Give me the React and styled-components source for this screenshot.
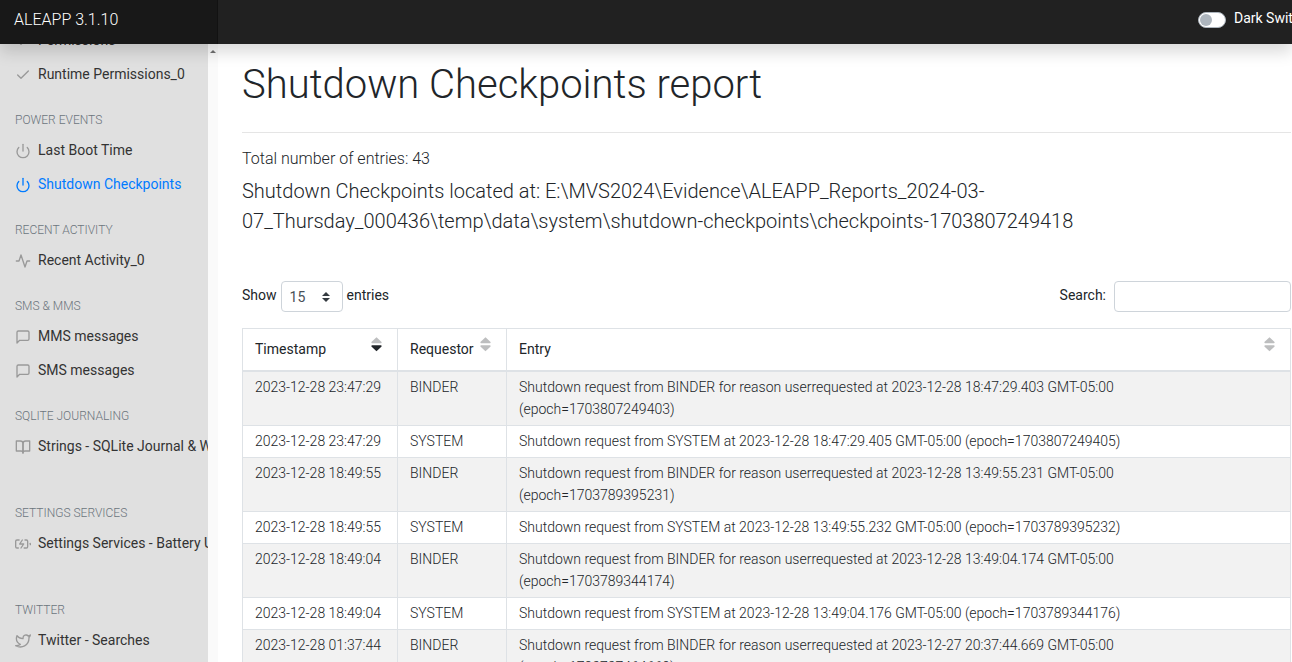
import React from "react";
import styled, { createGlobalStyle, css } from "styled-components";
import {
  FiActivity,
  FiBatteryCharging,
  FiBookOpen,
  FiCheck,
  FiMessageSquare,
  FiPower,
  FiTwitter,
} from "react-icons/fi";

const GlobalStyle = createGlobalStyle`
  *, *::before, *::after { box-sizing: border-box; }
  body {
    margin: 0;
    background: #fff;
    color: #212529;
    font-family: Roboto, "Liberation Sans", sans-serif;
    font-size: 16px;
    font-weight: 300;
    line-height: 24px;
  }
`;

const Page = styled.div`
  display: flex;
  flex-direction: column;
  height: 100vh;
  overflow: hidden;
`;

const TopBar = styled.header`
  position: relative;
  z-index: 2;
  display: flex;
  flex: none;
  justify-content: space-between;
  height: 44px;
  background: #212121;
  box-shadow: 0 8px 16px rgba(0, 0, 0, 0.15);
`;

const Brand = styled.a`
  width: 218px;
  padding: 8px 14px;
  background: rgba(0, 0, 0, 0.25);
  box-shadow: inset -1px 0 0 rgba(0, 0, 0, 0.25);
  color: #fff;
  text-decoration: none;
`;

const DarkSwitch = styled.label`
  display: flex;
  gap: 8px;
  width: 94px;
  padding-top: 6px;
  overflow: hidden;
  color: #fff;
  font-size: 14px;
  font-weight: 400;
  white-space: nowrap;
`;

const SwitchInput = styled.input`
  appearance: none;
  flex: none;
  width: 28px;
  height: 16px;
  margin: 6px 0 0;
  border: 1px solid #adb5bd;
  border-radius: 8px;
  background: #fff;

  &::before {
    content: "";
    display: block;
    width: 12px;
    height: 12px;
    margin: 1px;
    border-radius: 50%;
    background: #adb5bd;
  }

  &:checked::before {
    margin-left: 13px;
  }
`;

const Body = styled.div`
  display: flex;
  flex: 1;
  min-height: 0;
`;

const Sidebar = styled.nav`
  flex: none;
  width: 208px;
  overflow: hidden;
  background: #e0e0e0;
`;

const NavScroll = styled.div`
  margin-top: -21px;
`;

const Gutter = styled.div`
  flex: none;
  width: 10px;
  padding: 6px 2px;
  background: #fafafa;

  svg {
    display: block;
  }
`;

const NavHeading = styled.h6`
  margin: 19px 0 3px;
  padding: 0 15px;
  color: #6c757d;
  font-size: 12px;
  font-weight: 300;
  line-height: 20px;
  text-transform: uppercase;
`;

const NavList = styled.ul`
  margin: 0;
  padding: 0;
  list-style: none;
`;

const NavItem = styled.li`
  height: ${(p) => (p.$tall ? "55px" : "34px")};
`;

const NavLink = styled.a`
  display: flex;
  align-items: center;
  gap: 7px;
  height: 34px;
  padding-left: 15px;
  color: ${(p) => (p.$active ? "#007bff" : "#333")};
  font-size: 14px;
  font-weight: 400;
  text-decoration: none;
  white-space: nowrap;

  svg {
    flex: none;
    margin-top: 1px;
    color: ${(p) => (p.$active ? "inherit" : "#999")};
  }
`;

const Main = styled.main`
  flex: 1;
  min-width: 0;
  padding: 17px 1px 0 24px;
  overflow: hidden;
`;

const Title = styled.h1`
  margin: 0;
  font-size: 40px;
  font-weight: 300;
  line-height: 48px;
`;

const Rule = styled.hr`
  margin: 23px 0 14px;
  border: 0;
  border-top: 1px solid rgba(0, 0, 0, 0.1);
`;

const Total = styled.p`
  margin: 0 0 5px;
`;

const Location = styled.h5`
  margin: 0 0 45px;
  font-size: 20px;
  font-weight: 300;
  line-height: 30px;
`;

const Controls = styled.div`
  display: flex;
  justify-content: space-between;
  margin-bottom: 16px;
  font-size: 14px;
  font-weight: 400;
  line-height: 28px;
`;

const ControlLabel = styled.label`
  display: flex;
  align-items: flex-start;
  gap: ${(p) => p.$gap};
`;

const control = css`
  height: 31px;
  border: 1px solid #ced4da;
  border-radius: 4px;
  color: #495057;
  font: inherit;
`;

const LengthSelect = styled.select`
  ${control}
  appearance: none;
  width: 62px;
  padding: 0 8px;
  background: #fff
    url("data:image/svg+xml,%3Csvg xmlns='http://www.w3.org/2000/svg' viewBox='0 0 4 5'%3E%3Cpath fill='%23343a40' d='M2 0L0 2h4zm0 5L0 3h4z'/%3E%3C/svg%3E")
    no-repeat right 12px center / 8px 10px;
`;

const SearchInput = styled.input`
  ${control}
  width: 177px;
  padding: 0 8px;
  background: #fff;
`;

const Table = styled.table`
  width: 100%;
  border-collapse: collapse;
  table-layout: fixed;
  font-size: 14px;
  line-height: 22px;
`;

const Col = styled.col`
  width: ${(p) => p.$width};
`;

const HeadCell = styled.th`
  padding: 8px 15px 9px 12px;
  border: 1px solid #dee2e6;
  border-bottom-width: 2px;
  text-align: left;
`;

const SortButton = styled.button`
  display: flex;
  align-items: flex-start;
  justify-content: space-between;
  width: 100%;
  padding: 0;
  border: 0;
  background: none;
  color: inherit;
  font: inherit;
  font-weight: 400;
  line-height: 24px;

  svg {
    flex: none;
  }
`;

const Row = styled.tr`
  &:nth-of-type(odd) {
    background: #f2f2f2;
  }
`;

const Cell = styled.td`
  padding: 4px 12px 5px;
  border: 1px solid #dee2e6;
  vertical-align: top;
`;

const groups = [
  {
    items: [
      { icon: FiCheck, label: "Permissions" },
      { icon: FiCheck, label: "Runtime Permissions_0" },
    ],
  },
  {
    title: "Power Events",
    items: [
      { icon: FiPower, label: "Last Boot Time" },
      { icon: FiPower, label: "Shutdown Checkpoints", active: true },
    ],
  },
  {
    title: "Recent Activity",
    items: [{ icon: FiActivity, label: "Recent Activity_0" }],
  },
  {
    title: "SMS & MMS",
    items: [
      { icon: FiMessageSquare, label: "MMS messages" },
      { icon: FiMessageSquare, label: "SMS messages" },
    ],
  },
  {
    title: "SQLite Journaling",
    items: [{ icon: FiBookOpen, label: "Strings - SQLite Journal & WAL", tall: true }],
  },
  {
    title: "Settings Services",
    items: [{ icon: FiBatteryCharging, label: "Settings Services - Battery Usages", tall: true }],
  },
  {
    title: "Twitter",
    items: [{ icon: FiTwitter, label: "Twitter - Searches" }],
  },
];

const binder = "Shutdown request from BINDER for reason userrequested at ";
const system = "Shutdown request from SYSTEM at ";

const rows = [
  ["2023-12-28 23:47:29", "BINDER", binder + "2023-12-28 18:47:29.403 GMT-05:00", "(epoch=1703807249403)"],
  ["2023-12-28 23:47:29", "SYSTEM", system + "2023-12-28 18:47:29.405 GMT-05:00 (epoch=1703807249405)"],
  ["2023-12-28 18:49:55", "BINDER", binder + "2023-12-28 13:49:55.231 GMT-05:00", "(epoch=1703789395231)"],
  ["2023-12-28 18:49:55", "SYSTEM", system + "2023-12-28 13:49:55.232 GMT-05:00 (epoch=1703789395232)"],
  ["2023-12-28 18:49:04", "BINDER", binder + "2023-12-28 13:49:04.174 GMT-05:00", "(epoch=1703789344174)"],
  ["2023-12-28 18:49:04", "SYSTEM", system + "2023-12-28 13:49:04.176 GMT-05:00 (epoch=1703789344176)"],
  ["2023-12-28 01:37:44", "BINDER", binder + "2023-12-27 20:37:44.669 GMT-05:00", "(epoch=1703727464669)"],
];

const columns = [
  { label: "Timestamp", sorted: true },
  { label: "Requestor" },
  { label: "Entry" },
];

function SortIcon({ sorted }) {
  return (
    <svg width="11" height="15" viewBox="0 0 11 15" aria-hidden="true">
      <path d="M5.5 0.3 L10.6 5 Q10.8 6.2 9.8 6.2 H1.2 Q0.2 6.2 0.4 5 Z" fill="#bdbebf" />
      <path
        d="M5.5 14.2 L10.6 9.5 Q10.8 8.3 9.8 8.3 H1.2 Q0.2 8.3 0.4 9.5 Z"
        fill={sorted ? "#212529" : "#bdbebf"}
      />
    </svg>
  );
}

export default function App() {
  return (
    <Page>
      <GlobalStyle />
      <TopBar>
        <Brand href="#">ALEAPP 3.1.10</Brand>
        <DarkSwitch>
          <SwitchInput type="checkbox" />
          Dark Switch
        </DarkSwitch>
      </TopBar>
      <Body>
        <Sidebar>
          <NavScroll>
            {groups.map((group, i) => (
              <React.Fragment key={i}>
                {group.title && <NavHeading>{group.title}</NavHeading>}
                <NavList>
                  {group.items.map(({ icon: Icon, label, active, tall }) => (
                    <NavItem key={label} $tall={tall}>
                      <NavLink href="#" $active={active}>
                        <Icon size={16} />
                        {label}
                      </NavLink>
                    </NavItem>
                  ))}
                </NavList>
              </React.Fragment>
            ))}
          </NavScroll>
        </Sidebar>
        <Gutter>
          <svg width="6" height="3" viewBox="0 0 6 3" aria-hidden="true">
            <path d="M3 0 L6 3 H0 Z" fill="#707070" />
          </svg>
        </Gutter>
        <Main>
          <Title>Shutdown Checkpoints report</Title>
          <Rule />
          <Total>Total number of entries: 43</Total>
          <Location>
            Shutdown Checkpoints located at:
            E:\MVS2024\Evidence\ALEAPP_Reports_2024-03-07_Thursday_000436\temp\data\system\shutdown-checkpoints\checkpoints-1703807249418
          </Location>
          <Controls>
            <ControlLabel $gap="4px">
              Show
              <LengthSelect defaultValue="15">
                <option>15</option>
                <option>50</option>
                <option>100</option>
              </LengthSelect>
              entries
            </ControlLabel>
            <ControlLabel $gap="8px">
              Search:
              <SearchInput type="search" />
            </ControlLabel>
          </Controls>
          <Table>
            <colgroup>
              <Col $width="155px" />
              <Col $width="109px" />
              <Col $width="auto" />
            </colgroup>
            <thead>
              <tr>
                {columns.map(({ label, sorted }) => (
                  <HeadCell key={label}>
                    <SortButton type="button">
                      {label}
                      <SortIcon sorted={sorted} />
                    </SortButton>
                  </HeadCell>
                ))}
              </tr>
            </thead>
            <tbody>
              {rows.map(([time, requestor, entry, epoch], i) => (
                <Row key={i}>
                  <Cell>{time}</Cell>
                  <Cell>{requestor}</Cell>
                  <Cell>
                    {entry}
                    {epoch && <br />}
                    {epoch}
                  </Cell>
                </Row>
              ))}
            </tbody>
          </Table>
        </Main>
      </Body>
    </Page>
  );
}
